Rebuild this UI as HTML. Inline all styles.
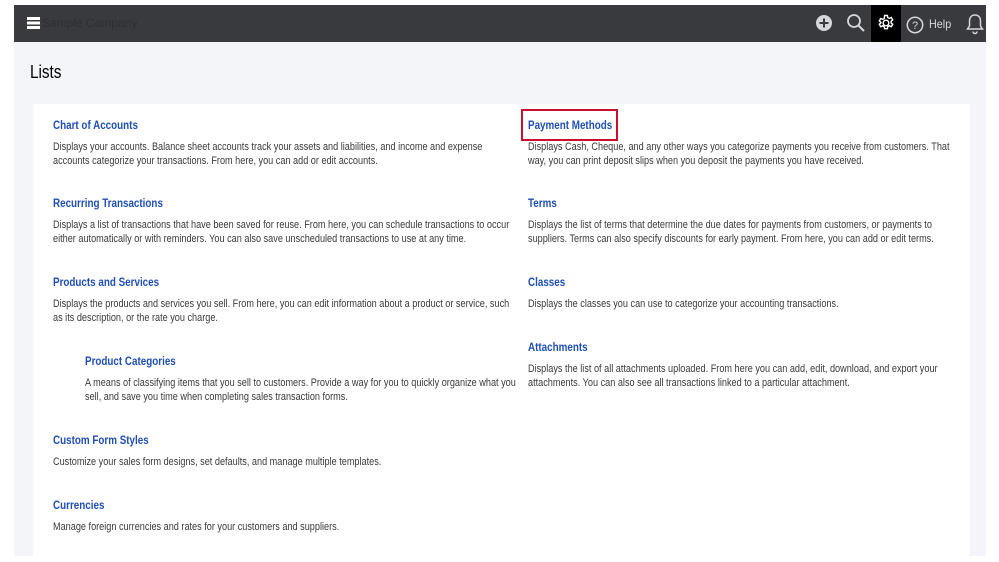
<!DOCTYPE html><html><head><style>
body{margin:0;width:999px;height:562px;background:#fff;position:relative;overflow:hidden;font-family:"Liberation Sans",sans-serif}
#app{position:absolute;left:14px;top:5px;width:972px;height:551px;background:#f4f5f8}
#bar{position:absolute;left:0;top:0;width:972px;height:37px;background:#393a3d}
#card{position:absolute;left:19px;top:99px;width:937px;height:452px;background:#fff}
.t{position:absolute;color:#1f4fb4;font-weight:bold;font-size:12px;white-space:nowrap;transform:scaleX(0.82);transform-origin:0 0}
.d{position:absolute;color:#393a3d;font-size:11px;line-height:14px;white-space:nowrap;transform:scaleX(0.83);transform-origin:0 0}
</style></head><body><div id="app">
<div id="bar">
<div style="position:absolute;left:13px;top:12px;width:13px;height:2.5px;background:#fff;box-shadow:0 4.5px 0 #fff,0 9px 0 #fff"></div>
<div style="position:absolute;left:28px;top:11px;font-size:12px;color:#2e2f31">Sample Company</div>
<svg style="position:absolute;left:801px;top:9px" width="18" height="18"><circle cx="9" cy="9" r="8" fill="#d4d7dc"/><path d="M9 4.5v9M4.5 9h9" stroke="#393a3d" stroke-width="2"/></svg>
<svg style="position:absolute;left:832px;top:8px" width="20" height="20"><circle cx="8" cy="8" r="6" fill="none" stroke="#d4d7dc" stroke-width="1.8"/><path d="M12.5 12.5l5.5 5.5" stroke="#d4d7dc" stroke-width="2"/></svg>
<div style="position:absolute;left:857px;top:0;width:30px;height:37px;background:#000"></div>
<svg style="position:absolute;left:863px;top:9px" width="18" height="18" viewBox="0 0 18 18"><g stroke="#fff" stroke-width="1.4" fill="none"><circle cx="9" cy="9" r="2.8"/><path d="M7.6 1.5h2.8l.4 2.1 1.5.8 2-.9 1.4 2.4-1.6 1.4v1.6l1.6 1.4-1.4 2.4-2-.9-1.5.8-.4 2.1H7.6l-.4-2.1-1.5-.8-2 .9-1.4-2.4 1.6-1.4V8.3L2.3 6.9l1.4-2.4 2 .9 1.5-.8z"/></g></svg>
<svg style="position:absolute;left:892px;top:11px" width="18" height="18"><circle cx="9" cy="9" r="7.7" fill="none" stroke="#d4d7dc" stroke-width="1.5"/><text x="9" y="13" font-size="11" fill="#d4d7dc" text-anchor="middle" font-family="Liberation Sans">?</text></svg>
<div style="position:absolute;left:915px;top:12px;font-size:12px;color:#d4d7dc;transform:scaleX(0.9);transform-origin:0 0">Help</div>
<svg style="position:absolute;left:951px;top:8px" width="20" height="22"><path d="M10 2c-3.5 0-5.5 2.5-5.5 6v5l-2 3h15l-2-3V8c0-3.5-2-6-5.5-6z M8 18.5a2 2 0 0 0 4 0" fill="none" stroke="#d4d7dc" stroke-width="1.5"/></svg>
</div>
<div style="position:absolute;left:16px;top:57px;font-size:18px;color:#000;transform:scaleX(0.85);transform-origin:0 0">Lists</div>
<div id="card">
<div class="t" style="left:20px;top:14px">Chart of Accounts</div>
<div class="d" style="left:20px;top:36px">Displays your accounts. Balance sheet accounts track your assets and liabilities, and income and expense<br>accounts categorize your transactions. From here, you can add or edit accounts.</div>
<div class="t" style="left:20px;top:92px">Recurring Transactions</div>
<div class="d" style="left:20px;top:114px">Displays a list of transactions that have been saved for reuse. From here, you can schedule transactions to occur<br>either automatically or with reminders. You can also save unscheduled transactions to use at any time.</div>
<div class="t" style="left:20px;top:171px">Products and Services</div>
<div class="d" style="left:20px;top:193px">Displays the products and services you sell. From here, you can edit information about a product or service, such<br>as its description, or the rate you charge.</div>
<div class="t" style="left:52px;top:250px">Product Categories</div>
<div class="d" style="left:52px;top:272px">A means of classifying items that you sell to customers. Provide a way for you to quickly organize what you<br>sell, and save you time when completing sales transaction forms.</div>
<div class="t" style="left:20px;top:329px">Custom Form Styles</div>
<div class="d" style="left:20px;top:351px">Customize your sales form designs, set defaults, and manage multiple templates.</div>
<div class="t" style="left:20px;top:394px">Currencies</div>
<div class="d" style="left:20px;top:416px">Manage foreign currencies and rates for your customers and suppliers.</div>
<div style="position:absolute;left:488px;top:5px;width:97px;height:32px;border:2px solid #c8102e;box-sizing:border-box"></div>
<div class="t" style="left:495px;top:14px">Payment Methods</div>
<div class="d" style="left:495px;top:36px">Displays Cash, Cheque, and any other ways you categorize payments you receive from customers. That<br>way, you can print deposit slips when you deposit the payments you have received.</div>
<div class="t" style="left:495px;top:92px">Terms</div>
<div class="d" style="left:495px;top:114px">Displays the list of terms that determine the due dates for payments from customers, or payments to<br>suppliers. Terms can also specify discounts for early payment. From here, you can add or edit terms.</div>
<div class="t" style="left:495px;top:171px">Classes</div>
<div class="d" style="left:495px;top:193px">Displays the classes you can use to categorize your accounting transactions.</div>
<div class="t" style="left:495px;top:236px">Attachments</div>
<div class="d" style="left:495px;top:258px">Displays the list of all attachments uploaded. From here you can add, edit, download, and export your<br>attachments. You can also see all transactions linked to a particular attachment.</div>
</div></div></body></html>
